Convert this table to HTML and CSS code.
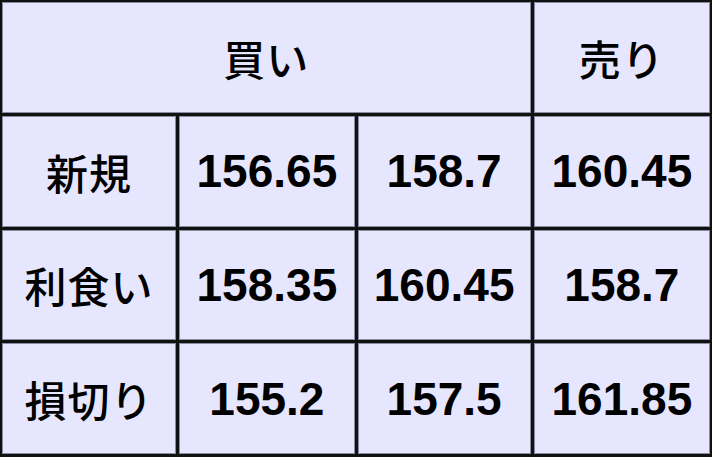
FILE: index.html
```html
<!DOCTYPE html>
<html lang="ja">
<head>
<meta charset="utf-8">
<title>価格表</title>
<link rel="stylesheet" href="styles.css">
</head>
<body>
<div class="table">
  <div class="cell head span3">買い</div>
  <div class="cell head">売り</div>

  <div class="cell label">新規</div>
  <div class="cell num">156.65</div>
  <div class="cell num">158.7</div>
  <div class="cell num">160.45</div>

  <div class="cell label">利食い</div>
  <div class="cell num">158.35</div>
  <div class="cell num">160.45</div>
  <div class="cell num">158.7</div>

  <div class="cell label">損切り</div>
  <div class="cell num">155.2</div>
  <div class="cell num">157.5</div>
  <div class="cell num">161.85</div>
</div>
</body>
</html>
```

FILE: styles.css
```css
html, body {
  margin: 0;
  padding: 0;
  background: #111;
}

.table {
  box-sizing: border-box;
  width: 712px;
  height: 457px;
  display: grid;
  grid-template-columns: 174fr 175fr 173fr 176fr;
  grid-template-rows: repeat(4, 1fr);
  gap: 3px;
  padding: 2px 2px 3px 2px;
  background: #111;
}

.cell {
  background: #e6e6ff;
  box-shadow: inset 0 0 0 1px #8a8aa0;
  display: flex;
  align-items: center;
  justify-content: center;
  color: #000;
}

.span3 {
  grid-column: span 3;
}

.head, .label {
  font-family: "Noto Sans CJK JP", "Noto Sans", sans-serif;
  font-weight: 500;
  font-size: 42px;
  letter-spacing: 1px;
}

.num {
  font-family: "Liberation Sans", Arial, sans-serif;
  font-weight: bold;
  font-size: 46px;
}
```
